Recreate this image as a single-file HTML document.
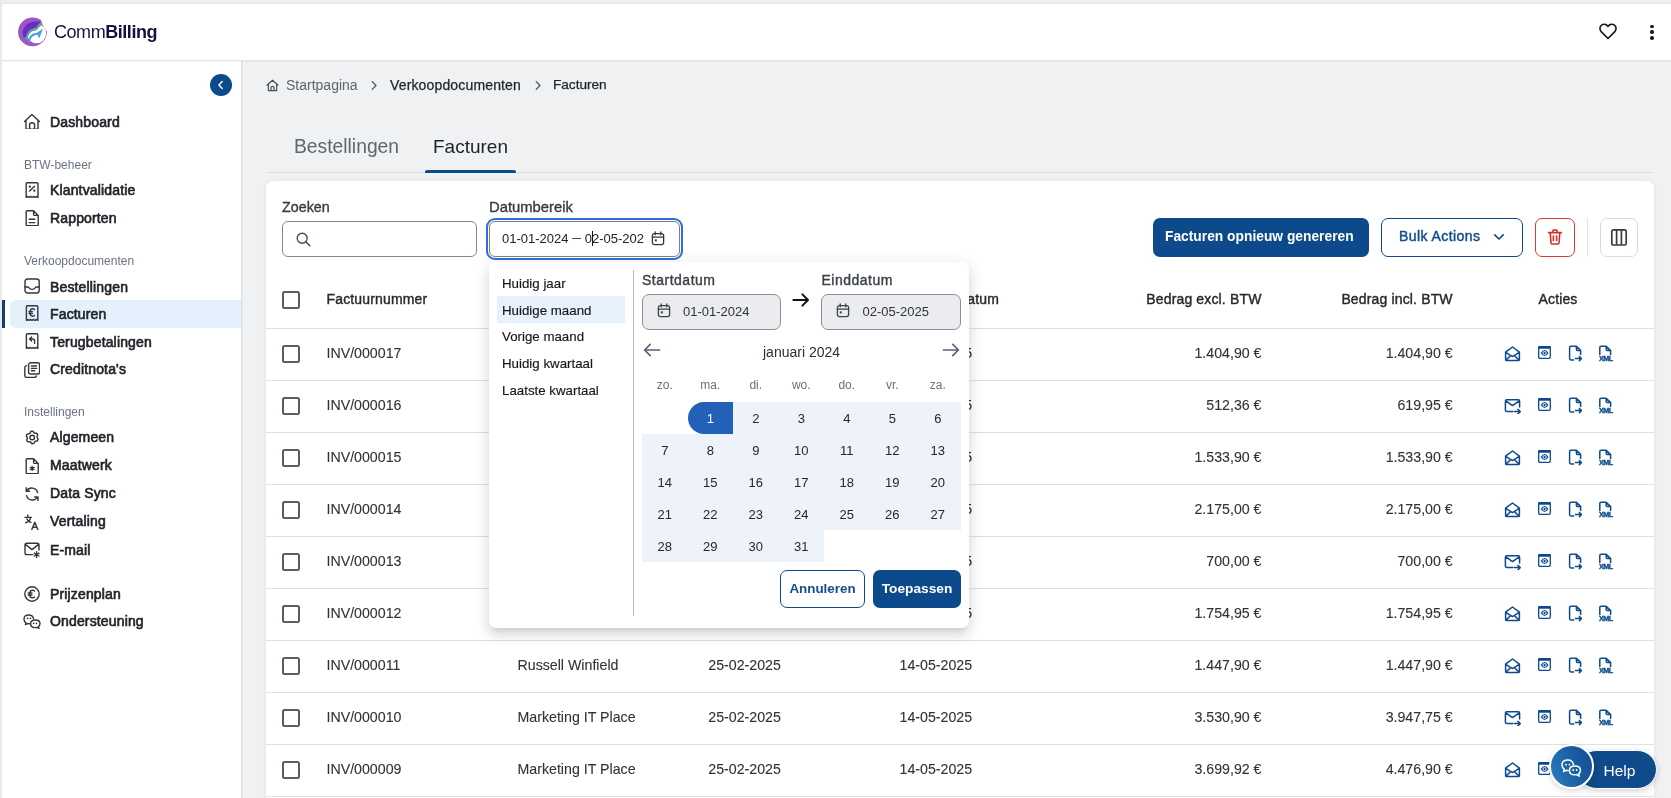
<!DOCTYPE html>
<html><head><meta charset="utf-8">
<style>
*{box-sizing:border-box;margin:0;padding:0}
html{-webkit-font-smoothing:antialiased}
body{will-change:transform}
html,body{width:1671px;height:798px;overflow:hidden;background:#efefef;font-family:"Liberation Sans",sans-serif;color:#222}
.a{position:absolute}
.t{position:absolute;white-space:nowrap;line-height:20px}
svg{display:block}
#hdr{left:2px;top:4px;width:1669px;height:57px;background:#fff;border-bottom:1px solid #e3e4e6;}
#side{left:2px;top:61px;width:240px;height:737px;background:#fff;border-right:1px solid #dcdfe3}
#main{left:242px;top:61px;width:1429px;height:737px;background:#eff1f3;box-shadow:inset 1px 0 0 #eaecef}
.nav{font-size:14px;letter-spacing:0.15px;color:#1f2329;-webkit-text-stroke:0.65px #1f2329;margin-top:-0.6px}
.sec{font-size:12px;color:#6a7384}
.ic{position:absolute;left:24px;width:16px;height:16px}
.ic svg{width:16px;height:16px;fill:none;stroke:#33373d;stroke-width:1.4;stroke-linecap:round;stroke-linejoin:round}
.cb{left:282px;width:18px;height:18px;border:2px solid #5a5d62;border-radius:2.5px}
.th{font-size:14px;letter-spacing:0.15px;color:#26292d;-webkit-text-stroke:0.4px #26292d}
.td{font-size:14.2px;color:#303338;-webkit-text-stroke:0.1px #303338}
</style></head><body>

<div id="hdr" class="a"></div>
<div class="a" style="left:2px;top:3px;width:1669px;height:1px;background:#e7e7e7"></div>
<div class="a" style="left:0;top:0;width:2px;height:798px;background:#eaeaea"></div>
<!-- logo -->
<svg class="a" style="left:17px;top:17px" width="31" height="31" viewBox="0 0 31 31">
  <circle cx="15.5" cy="14.9" r="14.4" fill="#9d56c9"/>
  <circle cx="19.6" cy="16.6" r="9.6" fill="#fff"/>
    <path d="M23.2 0 L31 0 L31 14.2 L29.7 14.2 L25.5 8 Z" fill="#fff"/>
  <path d="M5.8 19.5 Q4.6 9.5 11.5 6.2 Q16.5 4 23.6 4.4 L19 11.4 C14.5 11.3 11 13.8 9.6 20.8 Z" fill="#6a2cc2"/>
  <path d="M9.6 22.8 C9.9 16.5 13 12.6 18.6 12.4 L24.4 6.4" fill="none" stroke="#5aa68c" stroke-width="2.3"/>
  <path d="M11.4 25 C11.6 19.4 14.4 16 19.6 16 L26 11.6 L22.2 21.4 L20.6 18 C16.5 17.8 13.8 20 13 25.4 Z" fill="#4b9fe1"/>
</svg>
<div class="t" style="left:54px;top:21.6px;font-size:18px;color:#1b1446;letter-spacing:-0.45px">Comm<b style="color:#170f42">Billing</b></div>
<!-- heart -->
<svg class="a" style="left:1598px;top:22px" width="20" height="19" viewBox="0 0 20 19"><path d="M10 16.5 L3.2 9.6 C1.4 7.7 1.6 4.6 3.6 3.1 C5.6 1.6 8.4 2.1 10 4.4 C11.6 2.1 14.4 1.6 16.4 3.1 C18.4 4.6 18.6 7.7 16.8 9.6 Z" fill="none" stroke="#1d1d1f" stroke-width="1.7" stroke-linejoin="round"/></svg>
<!-- kebab -->
<div class="a" style="left:1650px;top:24.5px;width:3.6px;height:3.6px;border-radius:50%;background:#1d1d1f"></div>
<div class="a" style="left:1650px;top:30.3px;width:3.6px;height:3.6px;border-radius:50%;background:#1d1d1f"></div>
<div class="a" style="left:1650px;top:36.1px;width:3.6px;height:3.6px;border-radius:50%;background:#1d1d1f"></div>

<div id="side" class="a"></div>
<!-- collapse btn -->
<div class="a" style="left:210px;top:74px;width:22px;height:22px;border-radius:50%;background:#0b4a8b"></div>
<svg class="a" style="left:210px;top:74px" width="22" height="22" viewBox="0 0 22 22"><path d="M12.2 7.6 L8.9 11 L12.2 14.4" fill="none" stroke="#fff" stroke-width="1.4" stroke-linecap="round" stroke-linejoin="round"/></svg>

<div class="ic" style="top:113px"><svg viewBox="0 0 16 16"><path d="M0.6 8.6 L7.9 1.5 L15.4 8.6 M2 7.4 V15.2 Q2 16.2 3 16.2 H13 Q14 16.2 14 15.2 V7.4 M5.6 16 V11.6 Q5.6 9.8 8 9.8 Q10.5 9.8 10.5 11.6 V16"/></svg></div>
<div class="t nav" style="left:50px;top:112.7px">Dashboard</div>

<div class="t sec" style="left:24px;top:154.8px">BTW-beheer</div>
<div class="ic" style="top:182px"><svg viewBox="0 0 16 16"><path d="M2.2 15.5 V1.8 Q2.2 0.8 3.2 0.8 H13 Q14 0.8 14 1.8 V15.5 L12.6 14.4 L11.1 15.5 L9.6 14.4 L8.1 15.5 L6.6 14.4 L5.1 15.5 L3.6 14.4 Z M5.6 9 L10.6 4.2"/><circle cx="5.9" cy="4.6" r="0.5" fill="#33373d"/><circle cx="10.3" cy="8.6" r="0.5" fill="#33373d"/></svg></div>
<div class="t nav" style="left:50px;top:180.2px">Klantvalidatie</div>
<div class="ic" style="top:210px"><svg viewBox="0 0 16 16"><path d="M9.6 0.8 H3.2 Q2.2 0.8 2.2 1.8 V14.8 Q2.2 15.8 3.2 15.8 H13.2 Q14.2 15.8 14.2 14.8 V5.4 Z M9.6 0.8 V4.4 Q9.6 5.4 10.6 5.4 H14.2 M5.2 9.2 H10.8 M5.2 12.6 H10.8"/></svg></div>
<div class="t nav" style="left:50px;top:208.3px">Rapporten</div>

<div class="t sec" style="left:24px;top:251.2px">Verkoopdocumenten</div>
<div class="ic" style="top:278px"><svg viewBox="0 0 16 16"><rect x="1" y="1" width="14.2" height="14" rx="2.4"/><path d="M1 9 H3.6 Q4.6 9 5.2 10 Q6 11.4 8.1 11.4 Q10.2 11.4 11 10 Q11.6 9 12.6 9 H15.2"/></svg></div>
<div class="t nav" style="left:50px;top:277.2px">Bestellingen</div>

<div class="a" style="left:10px;top:300px;width:231px;height:28px;background:#e4f0fc;border-radius:6px 0 0 6px"></div>
<div class="a" style="left:2px;top:300px;width:3px;height:28px;background:#0d3f7a"></div>
<div class="ic" style="top:305px"><svg viewBox="0 0 16 16"><path d="M2.4 15.5 V1.8 Q2.4 0.8 3.4 0.8 H12.8 Q13.8 0.8 13.8 1.8 V15.5 L12.4 14.4 L10.9 15.5 L9.4 14.4 L7.9 15.5 L6.4 14.4 L4.9 15.5 L3.6 14.4 Z M10.4 4.6 Q9.6 3.8 8.6 3.8 Q6 3.8 6 7.6 Q6 11.2 8.6 11.2 Q9.6 11.2 10.4 10.4 M5 6.8 H8.4 M5 8.6 H8.4"/></svg></div>
<div class="t nav" style="left:50px;top:304.7px">Facturen</div>
<div class="ic" style="top:333px"><svg viewBox="0 0 16 16"><path d="M2.4 15.5 V1.8 Q2.4 0.8 3.4 0.8 H12.8 Q13.8 0.8 13.8 1.8 V15.5 L12.4 14.4 L10.9 15.5 L9.4 14.4 L7.9 15.5 L6.4 14.4 L4.9 15.5 L3.6 14.4 Z M7.6 4 L5.6 6 L7.6 8 M5.6 6 H8.6 Q10.6 6 10.6 8 V10.4"/></svg></div>
<div class="t nav" style="left:50px;top:332.5px">Terugbetalingen</div>
<div class="ic" style="top:362px"><svg viewBox="0 0 16 16"><rect x="4.6" y="0.8" width="11" height="11.2" rx="2"/><path d="M2.4 3.6 Q0.8 4 0.8 5.6 V13.4 Q0.8 15.4 2.8 15.4 H10.4 Q12 15.4 12.4 14 M7.4 4 H12.6 M7.4 6.4 H12.6 M7.4 8.8 H10.6"/></svg></div>
<div class="t nav" style="left:50px;top:359.9px">Creditnota's</div>

<div class="t sec" style="left:24px;top:402.3px">Instellingen</div>
<div class="ic" style="top:430px"><svg viewBox="0 0 16 16"><path d="M6.9 1.3 Q8 0.6 9.1 1.3 L9.6 2.6 Q10.4 2.9 11 3.3 L12.4 3.1 Q13.4 3.7 13.8 5 L13.1 6.2 Q13.3 7 13.2 7.8 L14.1 8.9 Q14 10.2 13.1 11 L11.8 11 Q11.2 11.6 10.5 11.9 L10 13.2 Q8.8 13.9 7.5 13.6 L6.9 12.3 Q6.1 12.1 5.5 11.6 L4.1 11.9 Q3 11.3 2.6 10 L3.3 8.8 Q3.1 8 3.2 7.2 L2.3 6.1 Q2.4 4.8 3.4 4 L4.7 4 Q5.3 3.4 6.1 3.1 Z"/><circle cx="8.2" cy="7.5" r="2.3"/></svg></div>
<div class="t nav" style="left:50px;top:427.9px">Algemeen</div>
<div class="ic" style="top:458px"><svg viewBox="0 0 16 16"><path d="M9.6 0.8 H3.2 Q2.2 0.8 2.2 1.8 V14.8 Q2.2 15.8 3.2 15.8 H13.2 Q14.2 15.8 14.2 14.8 V5.4 Z M9.6 0.8 V4.4 Q9.6 5.4 10.6 5.4 H14.2 M8.2 8.4 V12.4 M6.4 9.4 L10 11.4 M10 9.4 L6.4 11.4"/></svg></div>
<div class="t nav" style="left:50px;top:455.9px">Maatwerk</div>
<div class="ic" style="top:486px"><svg viewBox="0 0 16 16"><path d="M13.6 6.6 A6 6 0 0 0 2.6 5 M2.2 1.8 V5.2 H5.6 M2.6 9.6 A6 6 0 0 0 13.6 11 M14 14.4 V11 H10.6"/></svg></div>
<div class="t nav" style="left:50px;top:483.8px">Data Sync</div>
<div class="ic" style="top:514px"><svg viewBox="0 0 16 16"><path d="M1 3.4 H7.4 M3.8 1 V3.4 M6.6 3.4 Q6 7.4 1.6 8.8 M2.8 5 Q4 7.4 7 8.4 M7.8 15.6 L10.8 8.2 L13.8 15.6 M8.8 13.2 H12.8"/></svg></div>
<div class="t nav" style="left:50px;top:511.7px">Vertaling</div>
<div class="ic" style="top:542px"><svg viewBox="0 0 16 16"><path d="M8.6 12.6 H2.8 Q1 12.6 1 10.8 V3 Q1 1.2 2.8 1.2 H13.2 Q15 1.2 15 3 V8 M1.4 2.4 L8 7.6 L14.6 2.4 M12.6 9.8 V15.4 M10.2 11.2 L15 14 M15 11.2 L10.2 14"/></svg></div>
<div class="t nav" style="left:50px;top:540.2px">E-mail</div>

<div class="ic" style="top:586px"><svg viewBox="0 0 16 16"><circle cx="8" cy="8" r="7.2"/><path d="M10.6 5 Q9.8 4.2 8.6 4.2 Q5.6 4.2 5.6 8 Q5.6 11.8 8.6 11.8 Q9.8 11.8 10.6 11 M4.2 7 H8 M4.2 9 H8"/></svg></div>
<div class="t nav" style="left:50px;top:584.1px">Prijzenplan</div>
<div class="ic" style="top:614px"><svg viewBox="0 0 18 16" style="width:18px;left:-1px;position:relative"><path d="M10.6 4.6 Q9.6 1 6 1 Q1 1 1 5.2 Q1 7.6 3 8.8 L2.4 10.6 L4.6 9.6 Q5.4 9.8 6.4 9.8"/><path d="M12.2 6 Q17 6 17 9.6 Q17 11.6 15.4 12.6 L16 14.4 L13.8 13.4 Q13 13.6 12.2 13.6 Q7.6 13.6 7.6 9.8 Q7.6 6 12.2 6 Z"/><path d="M4.6 4.4 H4.7 M7.4 4.4 H7.5 M10.6 9.4 H10.7 M13.4 9.4 H13.5" stroke-width="1.6"/></svg></div>
<div class="t nav" style="left:50px;top:612px">Ondersteuning</div>

<div id="main" class="a"></div>
<div class="a" style="left:2px;top:61px;width:1669px;height:1px;background:rgba(0,0,0,0.035)"></div>
<!-- breadcrumb -->
<svg class="a" style="left:266px;top:79px" width="13" height="13" viewBox="0 0 13 13"><path d="M1 6.2 L6.5 1.2 L12 6.2 M2.4 5.2 V11.6 H10.6 V5.2 M5 11.6 V8.6 Q5 7.4 6.5 7.4 Q8 7.4 8 8.6 V11.6" fill="none" stroke="#4a4f57" stroke-width="1.2" stroke-linejoin="round" stroke-linecap="round"/></svg>
<div class="t" style="left:286px;top:74.8px;font-size:14px;color:#5d636c">Startpagina</div>
<svg class="a" style="left:370px;top:80px" width="8" height="11" viewBox="0 0 8 11"><path d="M2.2 1.6 L6 5.5 L2.2 9.4" fill="none" stroke="#50555c" stroke-width="1.3" stroke-linecap="round" stroke-linejoin="round"/></svg>
<div class="t" style="left:390px;top:74.8px;font-size:14px;letter-spacing:0.15px;color:#1f2329;-webkit-text-stroke:0.25px #1f2329">Verkoopdocumenten</div>
<svg class="a" style="left:534px;top:80px" width="8" height="11" viewBox="0 0 8 11"><path d="M2.2 1.6 L6 5.5 L2.2 9.4" fill="none" stroke="#50555c" stroke-width="1.3" stroke-linecap="round" stroke-linejoin="round"/></svg>
<div class="t" style="left:553px;top:74.8px;font-size:13.6px;color:#1f2329;-webkit-text-stroke:0.25px #1f2329">Facturen</div>

<!-- tabs -->
<div class="t" style="left:294px;top:134.5px;font-size:19.3px;color:#5f6670;line-height:24px">Bestellingen</div>
<div class="t" style="left:433px;top:134.5px;font-size:19px;color:#1d2125;line-height:24px">Facturen</div>
<div class="a" style="left:266px;top:172px;width:1388px;height:1px;background:#dcdfe2"></div>
<div class="a" style="left:425px;top:170px;width:91px;height:3px;background:#0b4a8b;border-radius:2px 2px 0 0"></div>

<!-- card -->
<div class="a" style="left:266px;top:181px;width:1388px;height:640px;background:#fff;border-radius:7px;box-shadow:0 0 4px rgba(0,0,0,0.07)"></div>



<!-- filters -->
<div class="t" style="left:282px;top:196.8px;font-size:14.3px;color:#36393e;-webkit-text-stroke:0.35px #36393e">Zoeken</div>
<div class="t" style="left:489px;top:196.8px;font-size:14.8px;color:#36393e;-webkit-text-stroke:0.35px #36393e">Datumbereik</div>
<div class="a" style="left:282px;top:221px;width:195px;height:36px;border:1px solid #83878d;border-radius:6px"></div>
<svg class="a" style="left:295px;top:231px" width="17" height="17" viewBox="0 0 17 17"><circle cx="7.2" cy="7.2" r="5" fill="none" stroke="#45494f" stroke-width="1.35"/><path d="M10.8 10.8 L14.8 14.8" stroke="#45494f" stroke-width="1.4" stroke-linecap="round"/></svg>
<div class="a" style="left:486px;top:218.3px;width:196.6px;height:41.4px;border:2px solid #2f6fd6;border-radius:9px"></div>
<div class="a" style="left:489px;top:221px;width:190.6px;height:35.8px;border:1px solid #7b7f85;border-radius:6px"></div>
<div class="t" style="left:502px;top:228.5px;font-size:13px;color:#222">01-01-2024 <span style="display:inline-block;width:9px;height:1px;background:#4a4a4a;vertical-align:3.7px"></span> 0<span style="display:inline-block;width:1px;height:15px;background:#111;vertical-align:-3px;margin:0 -1px 0 0"></span>2-05-202</div>
<svg class="a" style="left:651px;top:231px" width="14" height="15" viewBox="0 0 14 15"><rect x="1.4" y="2.6" width="11.2" height="11" rx="2" fill="none" stroke="#33373d" stroke-width="1.3"/><path d="M4.2 1 V3.8 M9.8 1 V3.8 M1.4 6.2 H12.6" stroke="#33373d" stroke-width="1.3" stroke-linecap="round"/><rect x="3.8" y="8.4" width="2" height="2" fill="#33373d"/></svg>

<!-- toolbar buttons -->
<div class="a" style="left:1153px;top:218px;width:216px;height:39px;background:#0d4a8c;border-radius:7px"></div>
<div class="t" style="left:1165px;top:226.5px;font-size:13.8px;font-weight:bold;color:#fff">Facturen opnieuw genereren</div>
<div class="a" style="left:1381px;top:218px;width:142px;height:39px;border:1px solid #0d4a8c;border-radius:7px"></div>
<div class="t" style="left:1399px;top:226.3px;font-size:14px;letter-spacing:0.42px;color:#134d8f;-webkit-text-stroke:0.45px #134d8f">Bulk Actions</div>
<svg class="a" style="left:1492px;top:231px" width="14" height="12" viewBox="0 0 14 12"><path d="M2.8 3.8 L7 8 L11.2 3.8" fill="none" stroke="#134d8f" stroke-width="1.7" stroke-linecap="round" stroke-linejoin="round"/></svg>
<div class="a" style="left:1535px;top:218px;width:40px;height:39px;border:1px solid #d93838;border-radius:7px"></div>
<svg class="a" style="left:1546px;top:228px" width="18" height="18" viewBox="0 0 18 18"><path d="M2.6 4.6 H15.4 M7 4.4 V2.6 Q7 2 7.6 2 H10.4 Q11 2 11 2.6 V4.4 M4.2 4.8 L5 15 Q5.1 16 6 16 H12 Q12.9 16 13 15 L13.8 4.8 M7.4 8 V12.6 M10.6 8 V12.6" fill="none" stroke="#d32f2f" stroke-width="1.6" stroke-linecap="round" stroke-linejoin="round"/></svg>
<div class="a" style="left:1587px;top:217.5px;width:1px;height:39px;background:#e1e3e6"></div>
<div class="a" style="left:1600px;top:218px;width:38px;height:39px;border:1px solid #d9dbde;border-radius:7px"></div>
<svg class="a" style="left:1610px;top:227.5px" width="18" height="19" viewBox="0 0 18 19"><rect x="1.8" y="1.8" width="14.4" height="15.2" rx="1.6" fill="none" stroke="#3a3d42" stroke-width="1.7"/><path d="M6.6 1.8 V17 M11.4 1.8 V17" stroke="#3a3d42" stroke-width="1.7"/></svg>

<!-- table -->
<div class="a cb" style="top:291px"></div>
<div class="t th" style="left:326.5px;top:288.9px">Factuurnummer</div>
<div class="t th" style="left:517.5px;top:288.9px">Klant</div>
<div class="t th" style="left:708.3px;top:288.9px">Datum</div>
<div class="t th" style="right:672px;top:288.9px">Vervaldatum</div>
<div class="t th" style="right:409.5px;top:288.9px">Bedrag excl. BTW</div>
<div class="t th" style="right:218.3px;top:288.9px">Bedrag incl. BTW</div>
<div class="t th" style="left:1538.5px;top:288.9px">Acties</div>
<div class="a" style="left:266px;top:328px;width:1388px;height:1px;background:#e0e0e0"></div>
<div class="a cb" style="top:345px"></div>
<div class="t td" style="left:326.5px;top:343.1px">INV/000017</div>
<div class="t td" style="left:517.5px;top:343.1px">Marketing IT Place</div>
<div class="t td" style="left:708.3px;top:343.1px">25-02-2025</div>
<div class="t td" style="left:899.5px;top:343.1px">14-05-2025</div>
<div class="t td" style="right:409.5px;top:343.1px">1.404,90 €</div>
<div class="t td" style="right:218.3px;top:343.1px">1.404,90 €</div>
<svg class="a" style="left:1504px;top:345px" width="17" height="17" viewBox="0 0 17 17"><path d="M1.6 7.2 L8.5 2 L15.4 7.2 V14.4 Q15.4 15.6 14.2 15.6 H2.8 Q1.6 15.6 1.6 14.4 Z M1.8 7.4 L8.5 11.6 L15.2 7.4 M1.8 15.2 L6.6 10.6 M15.2 15.2 L10.4 10.6" fill="none" stroke="#0d4a8c" stroke-width="1.5" stroke-linejoin="round" stroke-linecap="round"/></svg>
<svg class="a" style="left:1537px;top:345px" width="15" height="15" viewBox="0 0 15 15"><rect x="1.7" y="1.6" width="11.6" height="11.7" rx="1.3" fill="none" stroke="#0d4a8c" stroke-width="1.3"/><rect x="1.2" y="1" width="12.6" height="2.7" rx="0.8" fill="#0d4a8c"/><path d="M3.6 8 Q7.55 2 11.5 8 Q7.55 14 3.6 8 Z" fill="#0d4a8c"/><circle cx="7.55" cy="8" r="1.6" fill="none" stroke="#fff" stroke-width="0.9"/><circle cx="7.55" cy="8" r="0.6" fill="#0d4a8c"/></svg>
<svg class="a" style="left:1568px;top:345px" width="16" height="17" viewBox="0 0 16 17"><path d="M8.4 1.2 H3 Q1.6 1.2 1.6 2.6 V13.6 Q1.6 15 3 15 H5.6 M8.4 1.2 L12.6 5.4 V9.4 M8.4 1.2 V4.4 Q8.4 5.4 9.4 5.4 H12.6 M7.4 13.6 H13.4 M11.4 11.6 L13.4 13.6 L11.4 15.6" fill="none" stroke="#0d4a8c" stroke-width="1.5" stroke-linejoin="round" stroke-linecap="round"/></svg>
<svg class="a" style="left:1597px;top:345px" width="17" height="17" viewBox="0 0 17 17"><path d="M9.2 1.2 H4.2 Q2.8 1.2 2.8 2.6 V9.6 M9.2 1.2 L13.6 5.6 V9.6 M9.2 1.2 V4.6 Q9.2 5.6 10.2 5.6 H13.6" fill="none" stroke="#0d4a8c" stroke-width="1.5" stroke-linejoin="round" stroke-linecap="round"/><text x="8.8" y="15.8" text-anchor="middle" font-family="Liberation Sans" font-weight="bold" font-size="7.2" fill="#0d4a8c" stroke="#0d4a8c" stroke-width="0.35" letter-spacing="-0.5">XML</text></svg>
<div class="a" style="left:266px;top:380px;width:1388px;height:1px;background:#e0e0e0"></div>
<div class="a cb" style="top:397px"></div>
<div class="t td" style="left:326.5px;top:395.1px">INV/000016</div>
<div class="t td" style="left:517.5px;top:395.1px">Marketing IT Place</div>
<div class="t td" style="left:708.3px;top:395.1px">25-02-2025</div>
<div class="t td" style="left:899.5px;top:395.1px">14-05-2025</div>
<div class="t td" style="right:409.5px;top:395.1px">512,36 €</div>
<div class="t td" style="right:218.3px;top:395.1px">619,95 €</div>
<svg class="a" style="left:1504px;top:397px" width="18" height="17" viewBox="0 0 18 17"><path d="M9 14.4 H2.8 Q1.4 14.4 1.4 13 V4.2 Q1.4 2.8 2.8 2.8 H14.2 Q15.6 2.8 15.6 4.2 V10 M1.8 3.8 L8.5 8.6 L15.2 3.8 M10.6 14.6 H16.2 M14 12.4 L16.2 14.6 L14 16.8" fill="none" stroke="#0d4a8c" stroke-width="1.5" stroke-linejoin="round" stroke-linecap="round"/></svg>
<svg class="a" style="left:1537px;top:397px" width="15" height="15" viewBox="0 0 15 15"><rect x="1.7" y="1.6" width="11.6" height="11.7" rx="1.3" fill="none" stroke="#0d4a8c" stroke-width="1.3"/><rect x="1.2" y="1" width="12.6" height="2.7" rx="0.8" fill="#0d4a8c"/><path d="M3.6 8 Q7.55 2 11.5 8 Q7.55 14 3.6 8 Z" fill="#0d4a8c"/><circle cx="7.55" cy="8" r="1.6" fill="none" stroke="#fff" stroke-width="0.9"/><circle cx="7.55" cy="8" r="0.6" fill="#0d4a8c"/></svg>
<svg class="a" style="left:1568px;top:397px" width="16" height="17" viewBox="0 0 16 17"><path d="M8.4 1.2 H3 Q1.6 1.2 1.6 2.6 V13.6 Q1.6 15 3 15 H5.6 M8.4 1.2 L12.6 5.4 V9.4 M8.4 1.2 V4.4 Q8.4 5.4 9.4 5.4 H12.6 M7.4 13.6 H13.4 M11.4 11.6 L13.4 13.6 L11.4 15.6" fill="none" stroke="#0d4a8c" stroke-width="1.5" stroke-linejoin="round" stroke-linecap="round"/></svg>
<svg class="a" style="left:1597px;top:397px" width="17" height="17" viewBox="0 0 17 17"><path d="M9.2 1.2 H4.2 Q2.8 1.2 2.8 2.6 V9.6 M9.2 1.2 L13.6 5.6 V9.6 M9.2 1.2 V4.6 Q9.2 5.6 10.2 5.6 H13.6" fill="none" stroke="#0d4a8c" stroke-width="1.5" stroke-linejoin="round" stroke-linecap="round"/><text x="8.8" y="15.8" text-anchor="middle" font-family="Liberation Sans" font-weight="bold" font-size="7.2" fill="#0d4a8c" stroke="#0d4a8c" stroke-width="0.35" letter-spacing="-0.5">XML</text></svg>
<div class="a" style="left:266px;top:432px;width:1388px;height:1px;background:#e0e0e0"></div>
<div class="a cb" style="top:449px"></div>
<div class="t td" style="left:326.5px;top:447.1px">INV/000015</div>
<div class="t td" style="left:517.5px;top:447.1px">Marketing IT Place</div>
<div class="t td" style="left:708.3px;top:447.1px">25-02-2025</div>
<div class="t td" style="left:899.5px;top:447.1px">14-05-2025</div>
<div class="t td" style="right:409.5px;top:447.1px">1.533,90 €</div>
<div class="t td" style="right:218.3px;top:447.1px">1.533,90 €</div>
<svg class="a" style="left:1504px;top:449px" width="17" height="17" viewBox="0 0 17 17"><path d="M1.6 7.2 L8.5 2 L15.4 7.2 V14.4 Q15.4 15.6 14.2 15.6 H2.8 Q1.6 15.6 1.6 14.4 Z M1.8 7.4 L8.5 11.6 L15.2 7.4 M1.8 15.2 L6.6 10.6 M15.2 15.2 L10.4 10.6" fill="none" stroke="#0d4a8c" stroke-width="1.5" stroke-linejoin="round" stroke-linecap="round"/></svg>
<svg class="a" style="left:1537px;top:449px" width="15" height="15" viewBox="0 0 15 15"><rect x="1.7" y="1.6" width="11.6" height="11.7" rx="1.3" fill="none" stroke="#0d4a8c" stroke-width="1.3"/><rect x="1.2" y="1" width="12.6" height="2.7" rx="0.8" fill="#0d4a8c"/><path d="M3.6 8 Q7.55 2 11.5 8 Q7.55 14 3.6 8 Z" fill="#0d4a8c"/><circle cx="7.55" cy="8" r="1.6" fill="none" stroke="#fff" stroke-width="0.9"/><circle cx="7.55" cy="8" r="0.6" fill="#0d4a8c"/></svg>
<svg class="a" style="left:1568px;top:449px" width="16" height="17" viewBox="0 0 16 17"><path d="M8.4 1.2 H3 Q1.6 1.2 1.6 2.6 V13.6 Q1.6 15 3 15 H5.6 M8.4 1.2 L12.6 5.4 V9.4 M8.4 1.2 V4.4 Q8.4 5.4 9.4 5.4 H12.6 M7.4 13.6 H13.4 M11.4 11.6 L13.4 13.6 L11.4 15.6" fill="none" stroke="#0d4a8c" stroke-width="1.5" stroke-linejoin="round" stroke-linecap="round"/></svg>
<svg class="a" style="left:1597px;top:449px" width="17" height="17" viewBox="0 0 17 17"><path d="M9.2 1.2 H4.2 Q2.8 1.2 2.8 2.6 V9.6 M9.2 1.2 L13.6 5.6 V9.6 M9.2 1.2 V4.6 Q9.2 5.6 10.2 5.6 H13.6" fill="none" stroke="#0d4a8c" stroke-width="1.5" stroke-linejoin="round" stroke-linecap="round"/><text x="8.8" y="15.8" text-anchor="middle" font-family="Liberation Sans" font-weight="bold" font-size="7.2" fill="#0d4a8c" stroke="#0d4a8c" stroke-width="0.35" letter-spacing="-0.5">XML</text></svg>
<div class="a" style="left:266px;top:484px;width:1388px;height:1px;background:#e0e0e0"></div>
<div class="a cb" style="top:501px"></div>
<div class="t td" style="left:326.5px;top:499.1px">INV/000014</div>
<div class="t td" style="left:517.5px;top:499.1px">Marketing IT Place</div>
<div class="t td" style="left:708.3px;top:499.1px">25-02-2025</div>
<div class="t td" style="left:899.5px;top:499.1px">14-05-2025</div>
<div class="t td" style="right:409.5px;top:499.1px">2.175,00 €</div>
<div class="t td" style="right:218.3px;top:499.1px">2.175,00 €</div>
<svg class="a" style="left:1504px;top:501px" width="17" height="17" viewBox="0 0 17 17"><path d="M1.6 7.2 L8.5 2 L15.4 7.2 V14.4 Q15.4 15.6 14.2 15.6 H2.8 Q1.6 15.6 1.6 14.4 Z M1.8 7.4 L8.5 11.6 L15.2 7.4 M1.8 15.2 L6.6 10.6 M15.2 15.2 L10.4 10.6" fill="none" stroke="#0d4a8c" stroke-width="1.5" stroke-linejoin="round" stroke-linecap="round"/></svg>
<svg class="a" style="left:1537px;top:501px" width="15" height="15" viewBox="0 0 15 15"><rect x="1.7" y="1.6" width="11.6" height="11.7" rx="1.3" fill="none" stroke="#0d4a8c" stroke-width="1.3"/><rect x="1.2" y="1" width="12.6" height="2.7" rx="0.8" fill="#0d4a8c"/><path d="M3.6 8 Q7.55 2 11.5 8 Q7.55 14 3.6 8 Z" fill="#0d4a8c"/><circle cx="7.55" cy="8" r="1.6" fill="none" stroke="#fff" stroke-width="0.9"/><circle cx="7.55" cy="8" r="0.6" fill="#0d4a8c"/></svg>
<svg class="a" style="left:1568px;top:501px" width="16" height="17" viewBox="0 0 16 17"><path d="M8.4 1.2 H3 Q1.6 1.2 1.6 2.6 V13.6 Q1.6 15 3 15 H5.6 M8.4 1.2 L12.6 5.4 V9.4 M8.4 1.2 V4.4 Q8.4 5.4 9.4 5.4 H12.6 M7.4 13.6 H13.4 M11.4 11.6 L13.4 13.6 L11.4 15.6" fill="none" stroke="#0d4a8c" stroke-width="1.5" stroke-linejoin="round" stroke-linecap="round"/></svg>
<svg class="a" style="left:1597px;top:501px" width="17" height="17" viewBox="0 0 17 17"><path d="M9.2 1.2 H4.2 Q2.8 1.2 2.8 2.6 V9.6 M9.2 1.2 L13.6 5.6 V9.6 M9.2 1.2 V4.6 Q9.2 5.6 10.2 5.6 H13.6" fill="none" stroke="#0d4a8c" stroke-width="1.5" stroke-linejoin="round" stroke-linecap="round"/><text x="8.8" y="15.8" text-anchor="middle" font-family="Liberation Sans" font-weight="bold" font-size="7.2" fill="#0d4a8c" stroke="#0d4a8c" stroke-width="0.35" letter-spacing="-0.5">XML</text></svg>
<div class="a" style="left:266px;top:536px;width:1388px;height:1px;background:#e0e0e0"></div>
<div class="a cb" style="top:553px"></div>
<div class="t td" style="left:326.5px;top:551.1px">INV/000013</div>
<div class="t td" style="left:517.5px;top:551.1px">Marketing IT Place</div>
<div class="t td" style="left:708.3px;top:551.1px">25-02-2025</div>
<div class="t td" style="left:899.5px;top:551.1px">14-05-2025</div>
<div class="t td" style="right:409.5px;top:551.1px">700,00 €</div>
<div class="t td" style="right:218.3px;top:551.1px">700,00 €</div>
<svg class="a" style="left:1504px;top:553px" width="18" height="17" viewBox="0 0 18 17"><path d="M9 14.4 H2.8 Q1.4 14.4 1.4 13 V4.2 Q1.4 2.8 2.8 2.8 H14.2 Q15.6 2.8 15.6 4.2 V10 M1.8 3.8 L8.5 8.6 L15.2 3.8 M10.6 14.6 H16.2 M14 12.4 L16.2 14.6 L14 16.8" fill="none" stroke="#0d4a8c" stroke-width="1.5" stroke-linejoin="round" stroke-linecap="round"/></svg>
<svg class="a" style="left:1537px;top:553px" width="15" height="15" viewBox="0 0 15 15"><rect x="1.7" y="1.6" width="11.6" height="11.7" rx="1.3" fill="none" stroke="#0d4a8c" stroke-width="1.3"/><rect x="1.2" y="1" width="12.6" height="2.7" rx="0.8" fill="#0d4a8c"/><path d="M3.6 8 Q7.55 2 11.5 8 Q7.55 14 3.6 8 Z" fill="#0d4a8c"/><circle cx="7.55" cy="8" r="1.6" fill="none" stroke="#fff" stroke-width="0.9"/><circle cx="7.55" cy="8" r="0.6" fill="#0d4a8c"/></svg>
<svg class="a" style="left:1568px;top:553px" width="16" height="17" viewBox="0 0 16 17"><path d="M8.4 1.2 H3 Q1.6 1.2 1.6 2.6 V13.6 Q1.6 15 3 15 H5.6 M8.4 1.2 L12.6 5.4 V9.4 M8.4 1.2 V4.4 Q8.4 5.4 9.4 5.4 H12.6 M7.4 13.6 H13.4 M11.4 11.6 L13.4 13.6 L11.4 15.6" fill="none" stroke="#0d4a8c" stroke-width="1.5" stroke-linejoin="round" stroke-linecap="round"/></svg>
<svg class="a" style="left:1597px;top:553px" width="17" height="17" viewBox="0 0 17 17"><path d="M9.2 1.2 H4.2 Q2.8 1.2 2.8 2.6 V9.6 M9.2 1.2 L13.6 5.6 V9.6 M9.2 1.2 V4.6 Q9.2 5.6 10.2 5.6 H13.6" fill="none" stroke="#0d4a8c" stroke-width="1.5" stroke-linejoin="round" stroke-linecap="round"/><text x="8.8" y="15.8" text-anchor="middle" font-family="Liberation Sans" font-weight="bold" font-size="7.2" fill="#0d4a8c" stroke="#0d4a8c" stroke-width="0.35" letter-spacing="-0.5">XML</text></svg>
<div class="a" style="left:266px;top:588px;width:1388px;height:1px;background:#e0e0e0"></div>
<div class="a cb" style="top:605px"></div>
<div class="t td" style="left:326.5px;top:603.1px">INV/000012</div>
<div class="t td" style="left:517.5px;top:603.1px">Marketing IT Place</div>
<div class="t td" style="left:708.3px;top:603.1px">25-02-2025</div>
<div class="t td" style="left:899.5px;top:603.1px">14-05-2025</div>
<div class="t td" style="right:409.5px;top:603.1px">1.754,95 €</div>
<div class="t td" style="right:218.3px;top:603.1px">1.754,95 €</div>
<svg class="a" style="left:1504px;top:605px" width="17" height="17" viewBox="0 0 17 17"><path d="M1.6 7.2 L8.5 2 L15.4 7.2 V14.4 Q15.4 15.6 14.2 15.6 H2.8 Q1.6 15.6 1.6 14.4 Z M1.8 7.4 L8.5 11.6 L15.2 7.4 M1.8 15.2 L6.6 10.6 M15.2 15.2 L10.4 10.6" fill="none" stroke="#0d4a8c" stroke-width="1.5" stroke-linejoin="round" stroke-linecap="round"/></svg>
<svg class="a" style="left:1537px;top:605px" width="15" height="15" viewBox="0 0 15 15"><rect x="1.7" y="1.6" width="11.6" height="11.7" rx="1.3" fill="none" stroke="#0d4a8c" stroke-width="1.3"/><rect x="1.2" y="1" width="12.6" height="2.7" rx="0.8" fill="#0d4a8c"/><path d="M3.6 8 Q7.55 2 11.5 8 Q7.55 14 3.6 8 Z" fill="#0d4a8c"/><circle cx="7.55" cy="8" r="1.6" fill="none" stroke="#fff" stroke-width="0.9"/><circle cx="7.55" cy="8" r="0.6" fill="#0d4a8c"/></svg>
<svg class="a" style="left:1568px;top:605px" width="16" height="17" viewBox="0 0 16 17"><path d="M8.4 1.2 H3 Q1.6 1.2 1.6 2.6 V13.6 Q1.6 15 3 15 H5.6 M8.4 1.2 L12.6 5.4 V9.4 M8.4 1.2 V4.4 Q8.4 5.4 9.4 5.4 H12.6 M7.4 13.6 H13.4 M11.4 11.6 L13.4 13.6 L11.4 15.6" fill="none" stroke="#0d4a8c" stroke-width="1.5" stroke-linejoin="round" stroke-linecap="round"/></svg>
<svg class="a" style="left:1597px;top:605px" width="17" height="17" viewBox="0 0 17 17"><path d="M9.2 1.2 H4.2 Q2.8 1.2 2.8 2.6 V9.6 M9.2 1.2 L13.6 5.6 V9.6 M9.2 1.2 V4.6 Q9.2 5.6 10.2 5.6 H13.6" fill="none" stroke="#0d4a8c" stroke-width="1.5" stroke-linejoin="round" stroke-linecap="round"/><text x="8.8" y="15.8" text-anchor="middle" font-family="Liberation Sans" font-weight="bold" font-size="7.2" fill="#0d4a8c" stroke="#0d4a8c" stroke-width="0.35" letter-spacing="-0.5">XML</text></svg>
<div class="a" style="left:266px;top:640px;width:1388px;height:1px;background:#e0e0e0"></div>
<div class="a cb" style="top:657px"></div>
<div class="t td" style="left:326.5px;top:655.1px">INV/000011</div>
<div class="t td" style="left:517.5px;top:655.1px">Russell Winfield</div>
<div class="t td" style="left:708.3px;top:655.1px">25-02-2025</div>
<div class="t td" style="left:899.5px;top:655.1px">14-05-2025</div>
<div class="t td" style="right:409.5px;top:655.1px">1.447,90 €</div>
<div class="t td" style="right:218.3px;top:655.1px">1.447,90 €</div>
<svg class="a" style="left:1504px;top:657px" width="17" height="17" viewBox="0 0 17 17"><path d="M1.6 7.2 L8.5 2 L15.4 7.2 V14.4 Q15.4 15.6 14.2 15.6 H2.8 Q1.6 15.6 1.6 14.4 Z M1.8 7.4 L8.5 11.6 L15.2 7.4 M1.8 15.2 L6.6 10.6 M15.2 15.2 L10.4 10.6" fill="none" stroke="#0d4a8c" stroke-width="1.5" stroke-linejoin="round" stroke-linecap="round"/></svg>
<svg class="a" style="left:1537px;top:657px" width="15" height="15" viewBox="0 0 15 15"><rect x="1.7" y="1.6" width="11.6" height="11.7" rx="1.3" fill="none" stroke="#0d4a8c" stroke-width="1.3"/><rect x="1.2" y="1" width="12.6" height="2.7" rx="0.8" fill="#0d4a8c"/><path d="M3.6 8 Q7.55 2 11.5 8 Q7.55 14 3.6 8 Z" fill="#0d4a8c"/><circle cx="7.55" cy="8" r="1.6" fill="none" stroke="#fff" stroke-width="0.9"/><circle cx="7.55" cy="8" r="0.6" fill="#0d4a8c"/></svg>
<svg class="a" style="left:1568px;top:657px" width="16" height="17" viewBox="0 0 16 17"><path d="M8.4 1.2 H3 Q1.6 1.2 1.6 2.6 V13.6 Q1.6 15 3 15 H5.6 M8.4 1.2 L12.6 5.4 V9.4 M8.4 1.2 V4.4 Q8.4 5.4 9.4 5.4 H12.6 M7.4 13.6 H13.4 M11.4 11.6 L13.4 13.6 L11.4 15.6" fill="none" stroke="#0d4a8c" stroke-width="1.5" stroke-linejoin="round" stroke-linecap="round"/></svg>
<svg class="a" style="left:1597px;top:657px" width="17" height="17" viewBox="0 0 17 17"><path d="M9.2 1.2 H4.2 Q2.8 1.2 2.8 2.6 V9.6 M9.2 1.2 L13.6 5.6 V9.6 M9.2 1.2 V4.6 Q9.2 5.6 10.2 5.6 H13.6" fill="none" stroke="#0d4a8c" stroke-width="1.5" stroke-linejoin="round" stroke-linecap="round"/><text x="8.8" y="15.8" text-anchor="middle" font-family="Liberation Sans" font-weight="bold" font-size="7.2" fill="#0d4a8c" stroke="#0d4a8c" stroke-width="0.35" letter-spacing="-0.5">XML</text></svg>
<div class="a" style="left:266px;top:692px;width:1388px;height:1px;background:#e0e0e0"></div>
<div class="a cb" style="top:709px"></div>
<div class="t td" style="left:326.5px;top:707.1px">INV/000010</div>
<div class="t td" style="left:517.5px;top:707.1px">Marketing IT Place</div>
<div class="t td" style="left:708.3px;top:707.1px">25-02-2025</div>
<div class="t td" style="left:899.5px;top:707.1px">14-05-2025</div>
<div class="t td" style="right:409.5px;top:707.1px">3.530,90 €</div>
<div class="t td" style="right:218.3px;top:707.1px">3.947,75 €</div>
<svg class="a" style="left:1504px;top:709px" width="18" height="17" viewBox="0 0 18 17"><path d="M9 14.4 H2.8 Q1.4 14.4 1.4 13 V4.2 Q1.4 2.8 2.8 2.8 H14.2 Q15.6 2.8 15.6 4.2 V10 M1.8 3.8 L8.5 8.6 L15.2 3.8 M10.6 14.6 H16.2 M14 12.4 L16.2 14.6 L14 16.8" fill="none" stroke="#0d4a8c" stroke-width="1.5" stroke-linejoin="round" stroke-linecap="round"/></svg>
<svg class="a" style="left:1537px;top:709px" width="15" height="15" viewBox="0 0 15 15"><rect x="1.7" y="1.6" width="11.6" height="11.7" rx="1.3" fill="none" stroke="#0d4a8c" stroke-width="1.3"/><rect x="1.2" y="1" width="12.6" height="2.7" rx="0.8" fill="#0d4a8c"/><path d="M3.6 8 Q7.55 2 11.5 8 Q7.55 14 3.6 8 Z" fill="#0d4a8c"/><circle cx="7.55" cy="8" r="1.6" fill="none" stroke="#fff" stroke-width="0.9"/><circle cx="7.55" cy="8" r="0.6" fill="#0d4a8c"/></svg>
<svg class="a" style="left:1568px;top:709px" width="16" height="17" viewBox="0 0 16 17"><path d="M8.4 1.2 H3 Q1.6 1.2 1.6 2.6 V13.6 Q1.6 15 3 15 H5.6 M8.4 1.2 L12.6 5.4 V9.4 M8.4 1.2 V4.4 Q8.4 5.4 9.4 5.4 H12.6 M7.4 13.6 H13.4 M11.4 11.6 L13.4 13.6 L11.4 15.6" fill="none" stroke="#0d4a8c" stroke-width="1.5" stroke-linejoin="round" stroke-linecap="round"/></svg>
<svg class="a" style="left:1597px;top:709px" width="17" height="17" viewBox="0 0 17 17"><path d="M9.2 1.2 H4.2 Q2.8 1.2 2.8 2.6 V9.6 M9.2 1.2 L13.6 5.6 V9.6 M9.2 1.2 V4.6 Q9.2 5.6 10.2 5.6 H13.6" fill="none" stroke="#0d4a8c" stroke-width="1.5" stroke-linejoin="round" stroke-linecap="round"/><text x="8.8" y="15.8" text-anchor="middle" font-family="Liberation Sans" font-weight="bold" font-size="7.2" fill="#0d4a8c" stroke="#0d4a8c" stroke-width="0.35" letter-spacing="-0.5">XML</text></svg>
<div class="a" style="left:266px;top:744px;width:1388px;height:1px;background:#e0e0e0"></div>
<div class="a cb" style="top:761px"></div>
<div class="t td" style="left:326.5px;top:759.1px">INV/000009</div>
<div class="t td" style="left:517.5px;top:759.1px">Marketing IT Place</div>
<div class="t td" style="left:708.3px;top:759.1px">25-02-2025</div>
<div class="t td" style="left:899.5px;top:759.1px">14-05-2025</div>
<div class="t td" style="right:409.5px;top:759.1px">3.699,92 €</div>
<div class="t td" style="right:218.3px;top:759.1px">4.476,90 €</div>
<svg class="a" style="left:1504px;top:761px" width="17" height="17" viewBox="0 0 17 17"><path d="M1.6 7.2 L8.5 2 L15.4 7.2 V14.4 Q15.4 15.6 14.2 15.6 H2.8 Q1.6 15.6 1.6 14.4 Z M1.8 7.4 L8.5 11.6 L15.2 7.4 M1.8 15.2 L6.6 10.6 M15.2 15.2 L10.4 10.6" fill="none" stroke="#0d4a8c" stroke-width="1.5" stroke-linejoin="round" stroke-linecap="round"/></svg>
<svg class="a" style="left:1537px;top:761px" width="15" height="15" viewBox="0 0 15 15"><rect x="1.7" y="1.6" width="11.6" height="11.7" rx="1.3" fill="none" stroke="#0d4a8c" stroke-width="1.3"/><rect x="1.2" y="1" width="12.6" height="2.7" rx="0.8" fill="#0d4a8c"/><path d="M3.6 8 Q7.55 2 11.5 8 Q7.55 14 3.6 8 Z" fill="#0d4a8c"/><circle cx="7.55" cy="8" r="1.6" fill="none" stroke="#fff" stroke-width="0.9"/><circle cx="7.55" cy="8" r="0.6" fill="#0d4a8c"/></svg>
<svg class="a" style="left:1568px;top:761px" width="16" height="17" viewBox="0 0 16 17"><path d="M8.4 1.2 H3 Q1.6 1.2 1.6 2.6 V13.6 Q1.6 15 3 15 H5.6 M8.4 1.2 L12.6 5.4 V9.4 M8.4 1.2 V4.4 Q8.4 5.4 9.4 5.4 H12.6 M7.4 13.6 H13.4 M11.4 11.6 L13.4 13.6 L11.4 15.6" fill="none" stroke="#0d4a8c" stroke-width="1.5" stroke-linejoin="round" stroke-linecap="round"/></svg>
<svg class="a" style="left:1597px;top:761px" width="17" height="17" viewBox="0 0 17 17"><path d="M9.2 1.2 H4.2 Q2.8 1.2 2.8 2.6 V9.6 M9.2 1.2 L13.6 5.6 V9.6 M9.2 1.2 V4.6 Q9.2 5.6 10.2 5.6 H13.6" fill="none" stroke="#0d4a8c" stroke-width="1.5" stroke-linejoin="round" stroke-linecap="round"/><text x="8.8" y="15.8" text-anchor="middle" font-family="Liberation Sans" font-weight="bold" font-size="7.2" fill="#0d4a8c" stroke="#0d4a8c" stroke-width="0.35" letter-spacing="-0.5">XML</text></svg>
<div class="a" style="left:266px;top:796px;width:1388px;height:1px;background:#e0e0e0"></div>
<!-- popup -->
<div class="a" style="left:489px;top:262px;width:480px;height:366px;background:#fff;border-radius:7px;box-shadow:0 5px 5px -3px rgba(0,0,0,0.08),0 8px 12px 1px rgba(0,0,0,0.08),0 3px 16px 2px rgba(0,0,0,0.08)"></div>
<div class="a" style="left:497px;top:296px;width:128px;height:27px;background:#e7f1fc"></div>
<div class="t" style="left:502px;top:274.1px;font-size:13.3px;color:#15171a;-webkit-text-stroke:0.15px #15171a">Huidig jaar</div>
<div class="t" style="left:502px;top:300.7px;font-size:13.3px;color:#15171a;-webkit-text-stroke:0.15px #15171a">Huidige maand</div>
<div class="t" style="left:502px;top:327.2px;font-size:13.3px;color:#15171a;-webkit-text-stroke:0.15px #15171a">Vorige maand</div>
<div class="t" style="left:502px;top:354.0px;font-size:13.3px;color:#15171a;-webkit-text-stroke:0.15px #15171a">Huidig kwartaal</div>
<div class="t" style="left:502px;top:380.8px;font-size:13.3px;color:#15171a;-webkit-text-stroke:0.15px #15171a">Laatste kwartaal</div>
<div class="a" style="left:633px;top:270px;width:1px;height:346px;background:#b9bcc0"></div>
<div class="t" style="left:642px;top:270px;font-size:14px;letter-spacing:0.5px;color:#3d424a;-webkit-text-stroke:0.4px #3d424a">Startdatum</div>
<div class="t" style="left:821.5px;top:270px;font-size:14px;letter-spacing:0.5px;color:#3d424a;-webkit-text-stroke:0.4px #3d424a">Einddatum</div>
<div class="a" style="left:642px;top:294px;width:139px;height:36px;background:#ebecef;border:1px solid #8b8e93;border-radius:7px"></div>
<svg class="a" style="left:656.5px;top:303px" width="14" height="15" viewBox="0 0 14 15"><rect x="1.4" y="2.6" width="11.2" height="11" rx="2" fill="none" stroke="#3d424a" stroke-width="1.3"/><path d="M4.2 1 V3.8 M9.8 1 V3.8 M1.4 6.2 H12.6" stroke="#3d424a" stroke-width="1.3" stroke-linecap="round"/><rect x="3.8" y="8.4" width="2" height="2" fill="#3d424a"/></svg>
<div class="t" style="left:683px;top:301.5px;font-size:13px;color:#30343a">01-01-2024</div>
<div class="a" style="left:821px;top:294px;width:140px;height:36px;background:#ebecef;border:1px solid #8b8e93;border-radius:7px"></div>
<svg class="a" style="left:836px;top:303px" width="14" height="15" viewBox="0 0 14 15"><rect x="1.4" y="2.6" width="11.2" height="11" rx="2" fill="none" stroke="#3d424a" stroke-width="1.3"/><path d="M4.2 1 V3.8 M9.8 1 V3.8 M1.4 6.2 H12.6" stroke="#3d424a" stroke-width="1.3" stroke-linecap="round"/><rect x="3.8" y="8.4" width="2" height="2" fill="#3d424a"/></svg>
<div class="t" style="left:862.5px;top:301.5px;font-size:13px;color:#30343a">02-05-2025</div>
<svg class="a" style="left:791px;top:290px" width="20" height="20" viewBox="0 0 20 20"><path d="M2.4 10 H17 M11.4 4.4 L17 10 L11.4 15.6" fill="none" stroke="#111" stroke-width="2" stroke-linecap="round" stroke-linejoin="round"/></svg>
<svg class="a" style="left:642px;top:341px" width="20" height="18" viewBox="0 0 20 18"><path d="M17.6 9 H2.6 M8.2 3.4 L2.6 9 L8.2 14.6" fill="none" stroke="#5b6270" stroke-width="1.7" stroke-linecap="round" stroke-linejoin="round"/></svg>
<svg class="a" style="left:941px;top:341px" width="20" height="18" viewBox="0 0 20 18"><path d="M2.4 9 H17.4 M11.8 3.4 L17.4 9 L11.8 14.6" fill="none" stroke="#5b6270" stroke-width="1.7" stroke-linecap="round" stroke-linejoin="round"/></svg>
<div class="t" style="left:763px;top:342.2px;font-size:14px;color:#2b2f35">januari 2024</div>
<div class="t" style="left:642.00px;width:45.5px;text-align:center;top:374.8px;font-size:12px;color:#6a707a">zo.</div>
<div class="t" style="left:687.50px;width:45.5px;text-align:center;top:374.8px;font-size:12px;color:#6a707a">ma.</div>
<div class="t" style="left:733.00px;width:45.5px;text-align:center;top:374.8px;font-size:12px;color:#6a707a">di.</div>
<div class="t" style="left:778.50px;width:45.5px;text-align:center;top:374.8px;font-size:12px;color:#6a707a">wo.</div>
<div class="t" style="left:824.00px;width:45.5px;text-align:center;top:374.8px;font-size:12px;color:#6a707a">do.</div>
<div class="t" style="left:869.50px;width:45.5px;text-align:center;top:374.8px;font-size:12px;color:#6a707a">vr.</div>
<div class="t" style="left:915.00px;width:45.5px;text-align:center;top:374.8px;font-size:12px;color:#6a707a">za.</div>
<div class="a" style="left:733px;top:402px;width:228px;height:32px;background:#edf2fb"></div>
<div class="a" style="left:642px;top:434px;width:319px;height:96px;background:#edf2fb"></div>
<div class="a" style="left:642px;top:530px;width:182px;height:32px;background:#edf2fb"></div>
<div class="a" style="left:688px;top:402px;width:45px;height:32px;background:#2360b8;border-radius:16px 0 0 16px"></div>
<div class="t" style="left:687.50px;width:45.5px;text-align:center;top:408.5px;font-size:13px;color:#fff">1</div>
<div class="t" style="left:733.00px;width:45.5px;text-align:center;top:408.5px;font-size:13px;color:#24272b">2</div>
<div class="t" style="left:778.50px;width:45.5px;text-align:center;top:408.5px;font-size:13px;color:#24272b">3</div>
<div class="t" style="left:824.00px;width:45.5px;text-align:center;top:408.5px;font-size:13px;color:#24272b">4</div>
<div class="t" style="left:869.50px;width:45.5px;text-align:center;top:408.5px;font-size:13px;color:#24272b">5</div>
<div class="t" style="left:915.00px;width:45.5px;text-align:center;top:408.5px;font-size:13px;color:#24272b">6</div>
<div class="t" style="left:642.00px;width:45.5px;text-align:center;top:440.5px;font-size:13px;color:#24272b">7</div>
<div class="t" style="left:687.50px;width:45.5px;text-align:center;top:440.5px;font-size:13px;color:#24272b">8</div>
<div class="t" style="left:733.00px;width:45.5px;text-align:center;top:440.5px;font-size:13px;color:#24272b">9</div>
<div class="t" style="left:778.50px;width:45.5px;text-align:center;top:440.5px;font-size:13px;color:#24272b">10</div>
<div class="t" style="left:824.00px;width:45.5px;text-align:center;top:440.5px;font-size:13px;color:#24272b">11</div>
<div class="t" style="left:869.50px;width:45.5px;text-align:center;top:440.5px;font-size:13px;color:#24272b">12</div>
<div class="t" style="left:915.00px;width:45.5px;text-align:center;top:440.5px;font-size:13px;color:#24272b">13</div>
<div class="t" style="left:642.00px;width:45.5px;text-align:center;top:472.5px;font-size:13px;color:#24272b">14</div>
<div class="t" style="left:687.50px;width:45.5px;text-align:center;top:472.5px;font-size:13px;color:#24272b">15</div>
<div class="t" style="left:733.00px;width:45.5px;text-align:center;top:472.5px;font-size:13px;color:#24272b">16</div>
<div class="t" style="left:778.50px;width:45.5px;text-align:center;top:472.5px;font-size:13px;color:#24272b">17</div>
<div class="t" style="left:824.00px;width:45.5px;text-align:center;top:472.5px;font-size:13px;color:#24272b">18</div>
<div class="t" style="left:869.50px;width:45.5px;text-align:center;top:472.5px;font-size:13px;color:#24272b">19</div>
<div class="t" style="left:915.00px;width:45.5px;text-align:center;top:472.5px;font-size:13px;color:#24272b">20</div>
<div class="t" style="left:642.00px;width:45.5px;text-align:center;top:504.5px;font-size:13px;color:#24272b">21</div>
<div class="t" style="left:687.50px;width:45.5px;text-align:center;top:504.5px;font-size:13px;color:#24272b">22</div>
<div class="t" style="left:733.00px;width:45.5px;text-align:center;top:504.5px;font-size:13px;color:#24272b">23</div>
<div class="t" style="left:778.50px;width:45.5px;text-align:center;top:504.5px;font-size:13px;color:#24272b">24</div>
<div class="t" style="left:824.00px;width:45.5px;text-align:center;top:504.5px;font-size:13px;color:#24272b">25</div>
<div class="t" style="left:869.50px;width:45.5px;text-align:center;top:504.5px;font-size:13px;color:#24272b">26</div>
<div class="t" style="left:915.00px;width:45.5px;text-align:center;top:504.5px;font-size:13px;color:#24272b">27</div>
<div class="t" style="left:642.00px;width:45.5px;text-align:center;top:536.5px;font-size:13px;color:#24272b">28</div>
<div class="t" style="left:687.50px;width:45.5px;text-align:center;top:536.5px;font-size:13px;color:#24272b">29</div>
<div class="t" style="left:733.00px;width:45.5px;text-align:center;top:536.5px;font-size:13px;color:#24272b">30</div>
<div class="t" style="left:778.50px;width:45.5px;text-align:center;top:536.5px;font-size:13px;color:#24272b">31</div>
<div class="a" style="left:780px;top:570px;width:85px;height:38px;border:1px solid #0d4a8c;border-radius:7px;background:#fff"></div>
<div class="t" style="left:780px;width:85px;text-align:center;top:578.5px;font-size:13.4px;font-weight:bold;color:#134d8f">Annuleren</div>
<div class="a" style="left:872.5px;top:570px;width:88.5px;height:38px;background:#0d4a8c;border-radius:7px"></div>
<div class="t" style="left:872.5px;width:89px;text-align:center;top:578.5px;font-size:13.7px;font-weight:bold;color:#fff">Toepassen</div>

<!-- help -->
<div class="a" style="left:1577px;top:750px;width:80px;height:38.5px;background:#0f4a8a;border:1.5px solid #fff;border-radius:20px;box-shadow:0 2px 6px rgba(0,0,0,0.18)"></div>
<div class="t" style="left:1603.5px;top:761px;font-size:15.5px;color:#fff">Help</div>
<div class="a" style="left:1548.8px;top:744.2px;width:45px;height:45px;border-radius:50%;background:linear-gradient(70deg,#2b7cc1 0%,#1b62a6 50%,#0f4b8d 100%);border:2px solid #fff;box-shadow:0 2px 6px rgba(0,0,0,0.16)"></div>
<svg class="a" style="left:1560px;top:757.5px" width="24" height="22" viewBox="0 0 24 22"><path d="M13.6 6.8 Q12.6 2 7.8 2 Q2 2 2 7 Q2 9.6 4.2 11.2 L3.6 13.6 L6.4 12.2 Q7.2 12.4 8 12.4" fill="none" stroke="#fff" stroke-width="1.5" stroke-linejoin="round" stroke-linecap="round"/><path d="M14.8 8 Q20.4 8 20.4 12.2 Q20.4 14.6 18.6 15.8 L19.2 18.2 L16.6 16.6 Q15.8 16.8 14.8 16.8 Q9.4 16.8 9.4 12.4 Q9.4 8 14.8 8 Z" fill="none" stroke="#fff" stroke-width="1.5" stroke-linejoin="round"/><path d="M6 6.6 H6.1 M9.4 6.6 H9.5 M13.2 12 H13.3 M16.6 12 H16.7" stroke="#fff" stroke-width="1.8" stroke-linecap="round"/></svg>
</body></html>
